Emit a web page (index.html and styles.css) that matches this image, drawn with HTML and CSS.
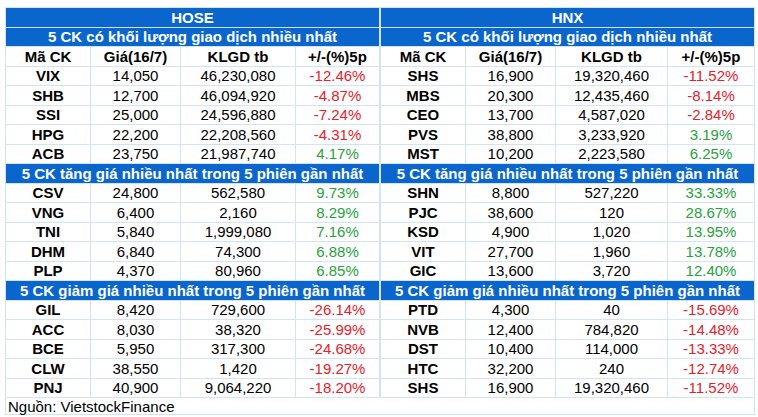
FILE: index.html
```html
<!DOCTYPE html>
<html lang="vi">
<head>
<meta charset="utf-8">
<link rel="stylesheet" href="styles.css">
</head>
<body>
<div class="sheet">
  <div class="panels">
    <div class="panel left">
      <div class="band market">HOSE</div>
      <div class="band">5 CK có khối lượng giao dịch nhiều nhất</div>
      <div class="c th">Mã CK</div><div class="c th">Giá(16/7)</div><div class="c th">KLGD tb</div><div class="c th">+/-(%)5p</div>
      <div class="c tk">VIX</div><div class="c">14,050</div><div class="c">46,230,080</div><div class="c dn">-12.46%</div>
      <div class="c tk">SHB</div><div class="c">12,700</div><div class="c">46,094,920</div><div class="c dn">-4.87%</div>
      <div class="c tk">SSI</div><div class="c">25,000</div><div class="c">24,596,880</div><div class="c dn">-7.24%</div>
      <div class="c tk">HPG</div><div class="c">22,200</div><div class="c">22,208,560</div><div class="c dn">-4.31%</div>
      <div class="c tk">ACB</div><div class="c">23,750</div><div class="c">21,987,740</div><div class="c up">4.17%</div>
      <div class="band">5 CK tăng giá nhiều nhất trong 5 phiên gần nhất</div>
      <div class="c tk">CSV</div><div class="c">24,800</div><div class="c">562,580</div><div class="c up">9.73%</div>
      <div class="c tk">VNG</div><div class="c">6,400</div><div class="c">2,160</div><div class="c up">8.29%</div>
      <div class="c tk">TNI</div><div class="c">5,840</div><div class="c">1,999,080</div><div class="c up">7.16%</div>
      <div class="c tk">DHM</div><div class="c">6,840</div><div class="c">74,300</div><div class="c up">6.88%</div>
      <div class="c tk">PLP</div><div class="c">4,370</div><div class="c">80,960</div><div class="c up">6.85%</div>
      <div class="band">5 CK giảm giá nhiều nhất trong 5 phiên gần nhất</div>
      <div class="c tk">GIL</div><div class="c">8,420</div><div class="c">729,600</div><div class="c dn">-26.14%</div>
      <div class="c tk">ACC</div><div class="c">8,030</div><div class="c">38,320</div><div class="c dn">-25.99%</div>
      <div class="c tk">BCE</div><div class="c">5,950</div><div class="c">317,300</div><div class="c dn">-24.68%</div>
      <div class="c tk">CLW</div><div class="c">38,550</div><div class="c">1,420</div><div class="c dn">-19.27%</div>
      <div class="c tk">PNJ</div><div class="c">40,900</div><div class="c">9,064,220</div><div class="c dn">-18.20%</div>
    </div>
    <div class="panel right">
      <div class="band market">HNX</div>
      <div class="band">5 CK có khối lượng giao dịch nhiều nhất</div>
      <div class="c th">Mã CK</div><div class="c th">Giá(16/7)</div><div class="c th">KLGD tb</div><div class="c th">+/-(%)5p</div>
      <div class="c tk">SHS</div><div class="c">16,900</div><div class="c">19,320,460</div><div class="c dn">-11.52%</div>
      <div class="c tk">MBS</div><div class="c">20,300</div><div class="c">12,435,460</div><div class="c dn">-8.14%</div>
      <div class="c tk">CEO</div><div class="c">13,700</div><div class="c">4,587,020</div><div class="c dn">-2.84%</div>
      <div class="c tk">PVS</div><div class="c">38,800</div><div class="c">3,233,920</div><div class="c up">3.19%</div>
      <div class="c tk">MST</div><div class="c">10,200</div><div class="c">2,223,580</div><div class="c up">6.25%</div>
      <div class="band">5 CK tăng giá nhiều nhất trong 5 phiên gần nhất</div>
      <div class="c tk">SHN</div><div class="c">8,800</div><div class="c">527,220</div><div class="c up">33.33%</div>
      <div class="c tk">PJC</div><div class="c">38,600</div><div class="c">120</div><div class="c up">28.67%</div>
      <div class="c tk">KSD</div><div class="c">4,900</div><div class="c">1,020</div><div class="c up">13.95%</div>
      <div class="c tk">VIT</div><div class="c">27,700</div><div class="c">1,960</div><div class="c up">13.78%</div>
      <div class="c tk">GIC</div><div class="c">13,600</div><div class="c">3,720</div><div class="c up">12.40%</div>
      <div class="band">5 CK giảm giá nhiều nhất trong 5 phiên gần nhất</div>
      <div class="c tk">PTD</div><div class="c">4,300</div><div class="c">40</div><div class="c dn">-15.69%</div>
      <div class="c tk">NVB</div><div class="c">12,400</div><div class="c">784,820</div><div class="c dn">-14.48%</div>
      <div class="c tk">DST</div><div class="c">10,400</div><div class="c">114,000</div><div class="c dn">-13.33%</div>
      <div class="c tk">HTC</div><div class="c">32,200</div><div class="c">240</div><div class="c dn">-12.74%</div>
      <div class="c tk">SHS</div><div class="c">16,900</div><div class="c">19,320,460</div><div class="c dn">-11.52%</div>
    </div>
  </div>
  <div class="source">Nguồn: VietstockFinance</div>
</div>
</body>
</html>
```

FILE: styles.css
```css
html, body {
  margin: 0;
  padding: 0;
  background: #ffffff;
}
body {
  font-family: "Liberation Sans", Arial, sans-serif;
  font-size: 15px;
  color: #000000;
}
.sheet {
  margin: 7px 0 0 5px;
  width: 748px;
  padding: 1px;
  background: #cfe4f6;
  display: flex;
  flex-direction: column;
  gap: 1px;
}
.panels {
  display: grid;
  grid-template-columns: 373px 373px;
  gap: 2px;
}
.panel {
  display: grid;
  grid-auto-rows: 18.5px;
  gap: 1px;
}
.left {
  grid-template-columns: 84px 89px 114px 83px;
}
.right {
  grid-template-columns: 84px 89px 111px 86px;
}
.c {
  background: #ffffff;
  display: flex;
  align-items: center;
  justify-content: center;
  line-height: 1;
  white-space: nowrap;
}
.th, .tk {
  font-weight: bold;
}
.dn {
  color: #e8202a;
}
.up {
  color: #25a33c;
}
.band {
  grid-column: 1 / -1;
  background: #0a66cc;
  color: #ffffff;
  font-weight: bold;
  display: flex;
  align-items: center;
  justify-content: center;
  line-height: 1;
  white-space: nowrap;
}
.source {
  background: #ffffff;
  height: 16px;
  display: flex;
  align-items: center;
  padding-left: 2px;
  line-height: 1;
}
```
